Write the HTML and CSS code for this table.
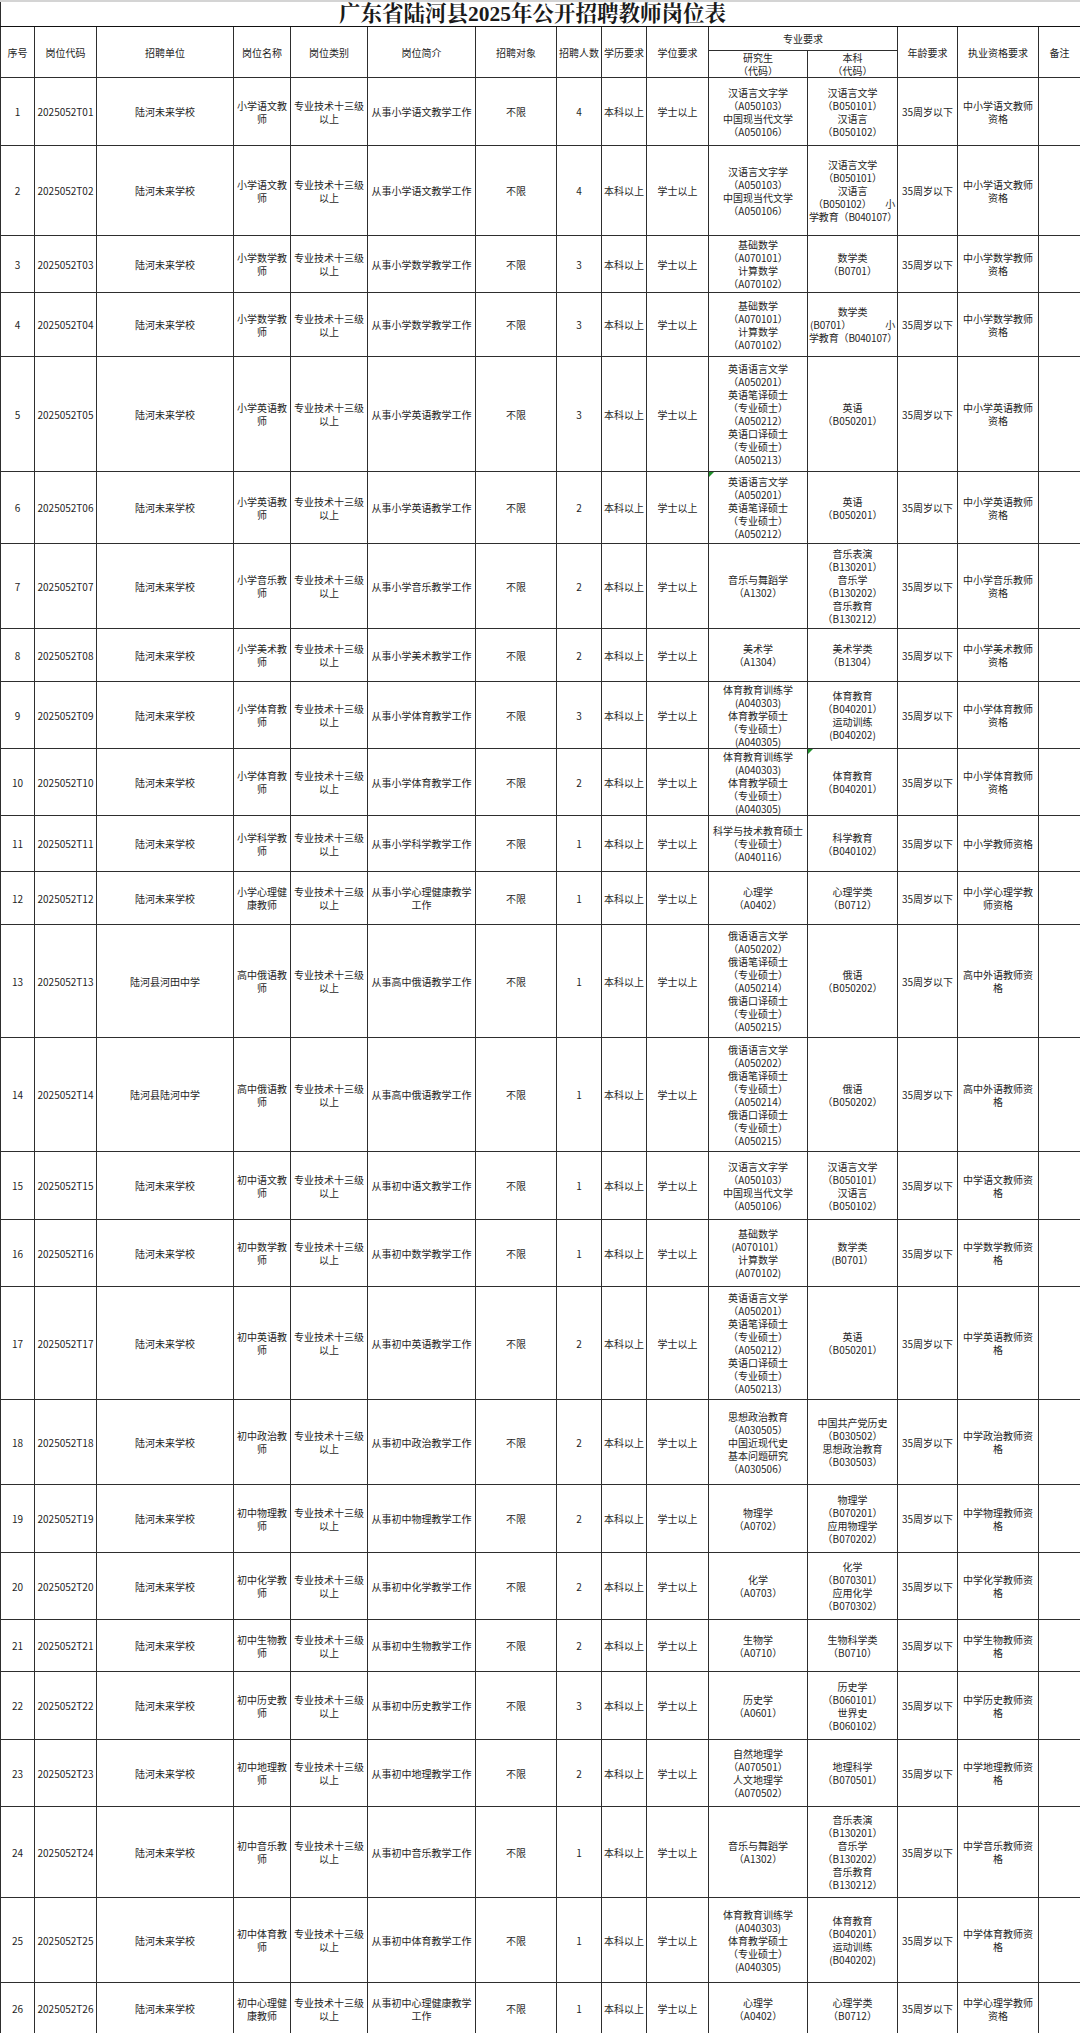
FILE: index.html
```html
<!DOCTYPE html>
<html lang="zh-CN">
<head>
<meta charset="utf-8">
<title>广东省陆河县2025年公开招聘教师岗位表</title>
<link rel="stylesheet" href="styles.css">
</head>
<body>
<table class="sheet">
<colgroup>
<col class="c-no"><col class="c-code"><col class="c-unit"><col class="c-name"><col class="c-type"><col class="c-desc"><col class="c-obj"><col class="c-num"><col class="c-edu"><col class="c-deg"><col class="c-pg"><col class="c-ug"><col class="c-age"><col class="c-qual"><col class="c-note">
</colgroup>
<tbody>
<tr class="h-title"><td class="title" colspan="15">广东省陆河县2025年公开招聘教师岗位表</td></tr>
<tr class="h-hd1">
<td rowspan="2">序号</td><td rowspan="2">岗位代码</td><td rowspan="2">招聘单位</td><td rowspan="2">岗位名称</td><td rowspan="2">岗位类别</td><td rowspan="2">岗位简介</td><td rowspan="2">招聘对象</td><td rowspan="2">招聘人数</td><td rowspan="2">学历要求</td><td rowspan="2">学位要求</td><td colspan="2">专业要求</td><td rowspan="2">年龄要求</td><td rowspan="2">执业资格要求</td><td rowspan="2">备注</td>
</tr>
<tr class="h-hd2"><td>研究生<br>（代码）</td><td>本科<br>（代码）</td></tr>

<tr class="h68"><td>1</td><td>2025052T01</td><td>陆河未来学校</td><td>小学语文教师</td><td>专业技术十三级以上</td><td>从事小学语文教学工作</td><td>不限</td><td>4</td><td>本科以上</td><td>学士以上</td><td>汉语言文字学<br>（A050103）<br>中国现当代文学<br>（A050106）</td><td>汉语言文学<br>（B050101）<br>汉语言<br>（B050102）</td><td>35周岁以下</td><td>中小学语文教师资格</td><td></td></tr>

<tr class="h90"><td>2</td><td>2025052T02</td><td>陆河未来学校</td><td>小学语文教师</td><td>专业技术十三级以上</td><td>从事小学语文教学工作</td><td>不限</td><td>4</td><td>本科以上</td><td>学士以上</td><td>汉语言文字学<br>（A050103）<br>中国现当代文学<br>（A050106）</td><td class="snug">汉语言文学<br>（B050101）<br>汉语言<br><span class="split"><span>（B050102）</span><span>小</span></span><span class="nowrap">学教育（B040107）</span></td><td>35周岁以下</td><td>中小学语文教师资格</td><td></td></tr>

<tr class="h57"><td>3</td><td>2025052T03</td><td>陆河未来学校</td><td>小学数学教师</td><td>专业技术十三级以上</td><td>从事小学数学教学工作</td><td>不限</td><td>3</td><td>本科以上</td><td>学士以上</td><td>基础数学<br>（A070101）<br>计算数学<br>（A070102）</td><td>数学类<br>（B0701）</td><td>35周岁以下</td><td>中小学数学教师资格</td><td></td></tr>

<tr class="h64"><td>4</td><td>2025052T04</td><td>陆河未来学校</td><td>小学数学教师</td><td>专业技术十三级以上</td><td>从事小学数学教学工作</td><td>不限</td><td>3</td><td>本科以上</td><td>学士以上</td><td>基础数学<br>（A070101）<br>计算数学<br>（A070102）</td><td class="snug">数学类<br><span class="split tight"><span>(B0701）</span><span>小</span></span><span class="nowrap">学教育（B040107）</span></td><td>35周岁以下</td><td>中小学数学教师资格</td><td></td></tr>

<tr class="h115"><td>5</td><td>2025052T05</td><td>陆河未来学校</td><td>小学英语教师</td><td>专业技术十三级以上</td><td>从事小学英语教学工作</td><td>不限</td><td>3</td><td>本科以上</td><td>学士以上</td><td>英语语言文学<br>（A050201）<br>英语笔译硕士<br>（专业硕士）<br>（A050212）<br>英语口译硕士<br>（专业硕士）<br>（A050213）</td><td>英语<br>（B050201）</td><td>35周岁以下</td><td>中小学英语教师资格</td><td></td></tr>

<tr class="h72"><td>6</td><td>2025052T06</td><td>陆河未来学校</td><td>小学英语教师</td><td>专业技术十三级以上</td><td>从事小学英语教学工作</td><td>不限</td><td>2</td><td>本科以上</td><td>学士以上</td><td class="flag">英语语言文学<br>（A050201）<br>英语笔译硕士<br>（专业硕士）<br>（A050212）</td><td>英语<br>（B050201）</td><td>35周岁以下</td><td>中小学英语教师资格</td><td></td></tr>

<tr class="h85"><td>7</td><td>2025052T07</td><td>陆河未来学校</td><td>小学音乐教师</td><td>专业技术十三级以上</td><td>从事小学音乐教学工作</td><td>不限</td><td>2</td><td>本科以上</td><td>学士以上</td><td>音乐与舞蹈学<br>（A1302）</td><td>音乐表演<br>（B130201）<br>音乐学<br>（B130202）<br>音乐教育<br>（B130212）</td><td>35周岁以下</td><td>中小学音乐教师资格</td><td></td></tr>

<tr class="h53"><td>8</td><td>2025052T08</td><td>陆河未来学校</td><td>小学美术教师</td><td>专业技术十三级以上</td><td>从事小学美术教学工作</td><td>不限</td><td>2</td><td>本科以上</td><td>学士以上</td><td>美术学<br>（A1304）</td><td>美术学类<br>（B1304）</td><td>35周岁以下</td><td>中小学美术教师资格</td><td></td></tr>

<tr class="h67"><td>9</td><td>2025052T09</td><td>陆河未来学校</td><td>小学体育教师</td><td>专业技术十三级以上</td><td>从事小学体育教学工作</td><td>不限</td><td>3</td><td>本科以上</td><td>学士以上</td><td>体育教育训练学<br>(A040303)<br>体育教学硕士<br>（专业硕士）<br>(A040305)</td><td>体育教育<br>（B040201）<br>运动训练<br>(B040202)</td><td>35周岁以下</td><td>中小学体育教师资格</td><td></td></tr>

<tr class="h67"><td>10</td><td>2025052T10</td><td>陆河未来学校</td><td>小学体育教师</td><td>专业技术十三级以上</td><td>从事小学体育教学工作</td><td>不限</td><td>2</td><td>本科以上</td><td>学士以上</td><td>体育教育训练学<br>(A040303)<br>体育教学硕士<br>（专业硕士）<br>(A040305)</td><td class="flag">体育教育<br>（B040201）</td><td>35周岁以下</td><td>中小学体育教师资格</td><td></td></tr>

<tr class="h56"><td>11</td><td>2025052T11</td><td>陆河未来学校</td><td>小学科学教师</td><td>专业技术十三级以上</td><td>从事小学科学教学工作</td><td>不限</td><td>1</td><td>本科以上</td><td>学士以上</td><td>科学与技术教育硕士<br>（专业硕士）<br>（A040116）</td><td>科学教育<br>（B040102）</td><td>35周岁以下</td><td>中小学教师资格</td><td></td></tr>

<tr class="h53"><td>12</td><td>2025052T12</td><td>陆河未来学校</td><td>小学心理健康教师</td><td>专业技术十三级以上</td><td>从事小学心理健康教学工作</td><td>不限</td><td>1</td><td>本科以上</td><td>学士以上</td><td>心理学<br>（A0402）</td><td>心理学类<br>（B0712）</td><td>35周岁以下</td><td>中小学心理学教师资格</td><td></td></tr>

<tr class="h113"><td>13</td><td>2025052T13</td><td>陆河县河田中学</td><td>高中俄语教师</td><td>专业技术十三级以上</td><td>从事高中俄语教学工作</td><td>不限</td><td>1</td><td>本科以上</td><td>学士以上</td><td>俄语语言文学<br>（A050202）<br>俄语笔译硕士<br>（专业硕士）<br>（A050214）<br>俄语口译硕士<br>（专业硕士）<br>（A050215）</td><td>俄语<br>（B050202）</td><td>35周岁以下</td><td>高中外语教师资格</td><td></td></tr>

<tr class="h114"><td>14</td><td>2025052T14</td><td>陆河县陆河中学</td><td>高中俄语教师</td><td>专业技术十三级以上</td><td>从事高中俄语教学工作</td><td>不限</td><td>1</td><td>本科以上</td><td>学士以上</td><td>俄语语言文学<br>（A050202）<br>俄语笔译硕士<br>（专业硕士）<br>（A050214）<br>俄语口译硕士<br>（专业硕士）<br>（A050215）</td><td>俄语<br>（B050202）</td><td>35周岁以下</td><td>高中外语教师资格</td><td></td></tr>

<tr class="h68"><td>15</td><td>2025052T15</td><td>陆河未来学校</td><td>初中语文教师</td><td>专业技术十三级以上</td><td>从事初中语文教学工作</td><td>不限</td><td>1</td><td>本科以上</td><td>学士以上</td><td>汉语言文字学<br>（A050103）<br>中国现当代文学<br>（A050106）</td><td>汉语言文学<br>（B050101）<br>汉语言<br>（B050102）</td><td>35周岁以下</td><td>中学语文教师资格</td><td></td></tr>

<tr class="h67"><td>16</td><td>2025052T16</td><td>陆河未来学校</td><td>初中数学教师</td><td>专业技术十三级以上</td><td>从事初中数学教学工作</td><td>不限</td><td>1</td><td>本科以上</td><td>学士以上</td><td>基础数学<br>(A070101）<br>计算数学<br>(A070102)</td><td>数学类<br>(B0701）</td><td>35周岁以下</td><td>中学数学教师资格</td><td></td></tr>

<tr class="h113"><td>17</td><td>2025052T17</td><td>陆河未来学校</td><td>初中英语教师</td><td>专业技术十三级以上</td><td>从事初中英语教学工作</td><td>不限</td><td>2</td><td>本科以上</td><td>学士以上</td><td>英语语言文学<br>（A050201）<br>英语笔译硕士<br>（专业硕士）<br>（A050212）<br>英语口译硕士<br>（专业硕士）<br>（A050213）</td><td>英语<br>（B050201）</td><td>35周岁以下</td><td>中学英语教师资格</td><td></td></tr>

<tr class="h85"><td>18</td><td>2025052T18</td><td>陆河未来学校</td><td>初中政治教师</td><td>专业技术十三级以上</td><td>从事初中政治教学工作</td><td>不限</td><td>2</td><td>本科以上</td><td>学士以上</td><td>思想政治教育<br>（A030505）<br>中国近现代史<br>基本问题研究<br>（A030506）</td><td>中国共产党历史<br>（B030502）<br>思想政治教育<br>（B030503）</td><td>35周岁以下</td><td>中学政治教师资格</td><td></td></tr>

<tr class="h68"><td>19</td><td>2025052T19</td><td>陆河未来学校</td><td>初中物理教师</td><td>专业技术十三级以上</td><td>从事初中物理教学工作</td><td>不限</td><td>2</td><td>本科以上</td><td>学士以上</td><td>物理学<br>（A0702）</td><td>物理学<br>（B070201）<br>应用物理学<br>（B070202）</td><td>35周岁以下</td><td>中学物理教师资格</td><td></td></tr>

<tr class="h67"><td>20</td><td>2025052T20</td><td>陆河未来学校</td><td>初中化学教师</td><td>专业技术十三级以上</td><td>从事初中化学教学工作</td><td>不限</td><td>2</td><td>本科以上</td><td>学士以上</td><td>化学<br>（A0703）</td><td>化学<br>（B070301）<br>应用化学<br>（B070302）</td><td>35周岁以下</td><td>中学化学教师资格</td><td></td></tr>

<tr class="h52"><td>21</td><td>2025052T21</td><td>陆河未来学校</td><td>初中生物教师</td><td>专业技术十三级以上</td><td>从事初中生物教学工作</td><td>不限</td><td>2</td><td>本科以上</td><td>学士以上</td><td>生物学<br>（A0710）</td><td>生物科学类<br>（B0710）</td><td>35周岁以下</td><td>中学生物教师资格</td><td></td></tr>

<tr class="h68"><td>22</td><td>2025052T22</td><td>陆河未来学校</td><td>初中历史教师</td><td>专业技术十三级以上</td><td>从事初中历史教学工作</td><td>不限</td><td>3</td><td>本科以上</td><td>学士以上</td><td>历史学<br>（A0601）</td><td>历史学<br>（B060101）<br>世界史<br>（B060102）</td><td>35周岁以下</td><td>中学历史教师资格</td><td></td></tr>

<tr class="h67"><td>23</td><td>2025052T23</td><td>陆河未来学校</td><td>初中地理教师</td><td>专业技术十三级以上</td><td>从事初中地理教学工作</td><td>不限</td><td>2</td><td>本科以上</td><td>学士以上</td><td>自然地理学<br>（A070501）<br>人文地理学<br>（A070502）</td><td>地理科学<br>（B070501）</td><td>35周岁以下</td><td>中学地理教师资格</td><td></td></tr>

<tr class="h91"><td>24</td><td>2025052T24</td><td>陆河未来学校</td><td>初中音乐教师</td><td>专业技术十三级以上</td><td>从事初中音乐教学工作</td><td>不限</td><td>1</td><td>本科以上</td><td>学士以上</td><td>音乐与舞蹈学<br>（A1302）</td><td>音乐表演<br>（B130201）<br>音乐学<br>（B130202）<br>音乐教育<br>（B130212）</td><td>35周岁以下</td><td>中学音乐教师资格</td><td></td></tr>

<tr class="h85"><td>25</td><td>2025052T25</td><td>陆河未来学校</td><td>初中体育教师</td><td>专业技术十三级以上</td><td>从事初中体育教学工作</td><td>不限</td><td>1</td><td>本科以上</td><td>学士以上</td><td>体育教育训练学<br>(A040303)<br>体育教学硕士<br>（专业硕士）<br>(A040305)</td><td>体育教育<br>（B040201）<br>运动训练<br>(B040202)</td><td>35周岁以下</td><td>中学体育教师资格</td><td></td></tr>

<tr class="h52"><td>26</td><td>2025052T26</td><td>陆河未来学校</td><td>初中心理健康教师</td><td>专业技术十三级以上</td><td>从事初中心理健康教学工作</td><td>不限</td><td>1</td><td>本科以上</td><td>学士以上</td><td>心理学<br>（A0402）</td><td>心理学类<br>（B0712）</td><td>35周岁以下</td><td>中学心理学教师资格</td><td></td></tr>
</tbody>
</table>
</body>
</html>
```

FILE: styles.css
```css
html, body {
  margin: 0;
  padding: 0;
  background: #ffffff;
}

body {
  font-family: "Noto Sans CJK SC", "Liberation Sans", sans-serif;
  font-size: 10px;
  line-height: 13px;
  color: #1e1e1e;
}

.sheet {
  width: 1080px;
  table-layout: fixed;
  border-collapse: collapse;
}

.c-no { width: 34px; }
.c-code { width: 62px; }
.c-unit { width: 137px; }
.c-name { width: 57px; }
.c-type { width: 77px; }
.c-desc { width: 108px; }
.c-obj { width: 81px; }
.c-num { width: 45px; }
.c-edu { width: 45px; }
.c-deg { width: 62px; }
.c-pg { width: 99px; }
.c-ug { width: 90px; }
.c-age { width: 60px; }
.c-qual { width: 81px; }
.c-note { width: 42px; }

.sheet td {
  border: 1px solid #2e2e2e;
  padding: 0 2px;
  text-align: center;
  vertical-align: middle;
  overflow: hidden;
  word-break: break-all;
}

.sheet td.title {
  border-top: 2px solid #d4d4d4;
  border-bottom: 1px solid #111111;
  font-family: "Liberation Serif", "Noto Serif CJK SC", "Noto Sans CJK SC", serif;
  font-weight: bold;
  font-size: 21.5px;
  line-height: 24px;
  color: #1a1a1a;
  padding: 0 16px 0 0;
}

.sheet td.snug {
  padding: 0 1px;
  letter-spacing: -0.15px;
}

.nowrap {
  white-space: nowrap;
}

.h-title { height: 25px; }
.h-hd1 { height: 24px; }
.h-hd2 { height: 26px; }
.h52 { height: 52px; }
.h53 { height: 53px; }
.h56 { height: 56px; }
.h57 { height: 57px; }
.h64 { height: 64px; }
.h67 { height: 67px; }
.h68 { height: 68px; }
.h72 { height: 72px; }
.h85 { height: 85px; }
.h90 { height: 90px; }
.h91 { height: 91px; }
.h113 { height: 113px; }
.h114 { height: 114px; }
.h115 { height: 115px; }

.split {
  display: flex;
  justify-content: space-between;
  padding-left: 4px;
  padding-right: 1px;
}

.split.tight {
  padding-left: 1px;
}

.sheet td.flag {
  position: relative;
}

.sheet td.flag::before {
  content: "";
  position: absolute;
  left: 0;
  top: 0;
  border-top: 5px solid #1f8f2a;
  border-right: 5px solid transparent;
}
```
